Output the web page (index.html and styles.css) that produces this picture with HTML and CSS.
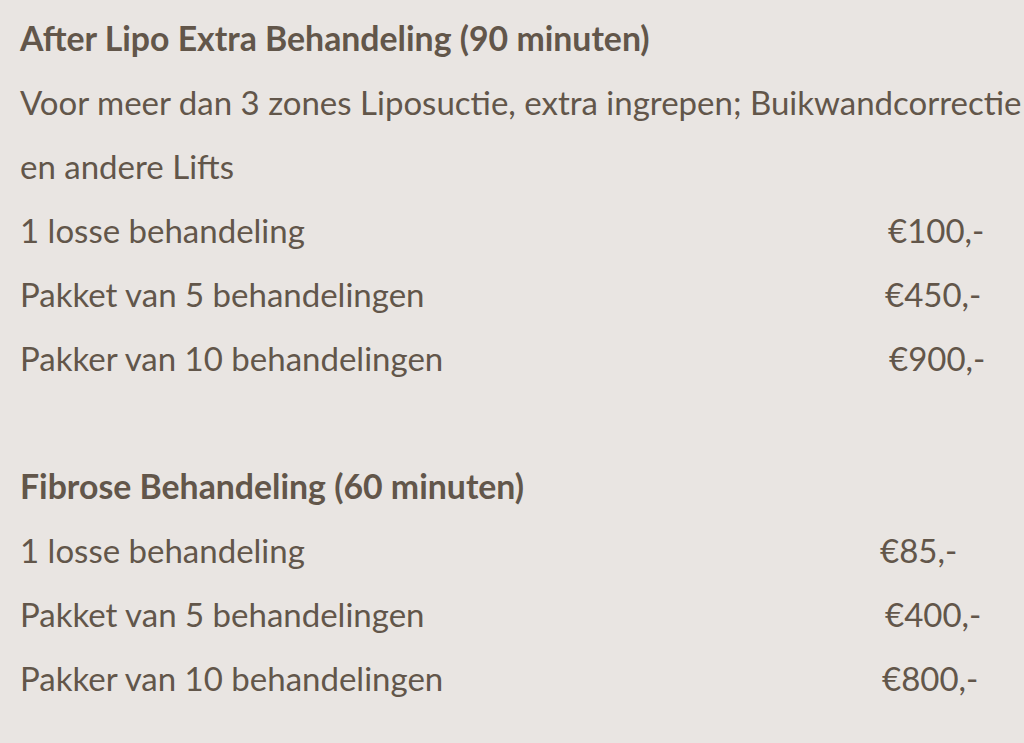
FILE: index.html
```html
<!DOCTYPE html>
<html lang="nl">
<head>
<meta charset="utf-8">
<title>Prijzen</title>
<link rel="stylesheet" href="styles.css">
</head>
<body>
<main class="prices">
  <section class="block">
    <h2 class="title">After Lipo Extra Behandeling (90 minuten)</h2>
    <p class="desc">Voor meer dan 3 zones Liposuctie, extra ingrepen; Buikwandcorrectie<br>en andere Lifts</p>
    <div class="row"><span class="label">1 losse behandeling</span><span class="price p-4">€100,-</span></div>
    <div class="row"><span class="label">Pakket van 5 behandelingen</span><span class="price p-1">€450,-</span></div>
    <div class="row"><span class="label">Pakker van 10 behandelingen</span><span class="price p-5">€900,-</span></div>
  </section>
  <section class="block">
    <h2 class="title">Fibrose Behandeling (60 minuten)</h2>
    <div class="row"><span class="label">1 losse behandeling</span><span class="price p-m4">€85,-</span></div>
    <div class="row"><span class="label">Pakket van 5 behandelingen</span><span class="price p-1">€400,-</span></div>
    <div class="row"><span class="label">Pakker van 10 behandelingen</span><span class="price p-m2">€800,-</span></div>
  </section>
</main>
</body>
</html>
```
FILE: styles.css
```css
html, body {
  margin: 0;
  padding: 0;
  background: #e9e5e2;
}
body {
  font-family: "Lato", "Noto Sans", sans-serif;
  color: #62564a;
  font-size: 33px;
  line-height: 64px;
}
.prices {
  padding: 6px 20px 0 20px;
  display: flex;
  flex-direction: column;
  gap: 64px;
}
.block {
  display: flex;
  flex-direction: column;
}
.title {
  margin: 0;
  font-size: 33.8px;
  font-weight: 700;
  line-height: 64px;
}
.desc {
  margin: 0;
  white-space: nowrap;
}
.row {
  display: grid;
  grid-template-columns: 864px auto;
}
.price { display: block; }
.p-1 { margin-left: 1px; }
.p-4 { margin-left: 4px; }
.p-5 { margin-left: 5px; }
.p-m2 { margin-left: -2px; }
.p-m4 { margin-left: -4px; }
```
